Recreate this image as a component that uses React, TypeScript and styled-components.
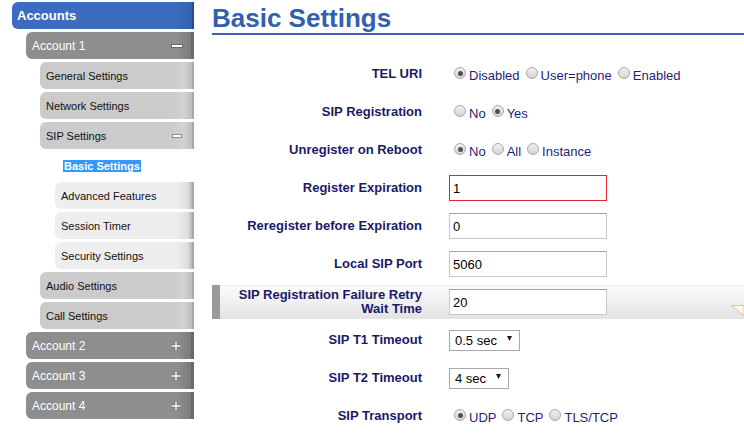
import React from 'react';
import styled, { createGlobalStyle, css } from 'styled-components';

const Global = createGlobalStyle`
  html, body { margin: 0; padding: 0; background: #fff; }
  body { font-family: "Liberation Sans", Arial, sans-serif; overflow: hidden; }
  * { box-sizing: border-box; }
`;

const Page = styled.div`
  display: flex;
  gap: 18px;
  width: 744px;
  height: 436px;
  overflow: hidden;
`;

const Sidebar = styled.nav`
  width: 194px;
  flex: none;
  padding-top: 2px;
  display: flex;
  flex-direction: column;
  gap: 3px;
`;

type Tone = 'blue' | 'dark' | 'light' | 'lighter' | 'none';

const tones: Record<Tone, ReturnType<typeof css>> = {
  blue: css`
    background: linear-gradient(to right, #3b6cc0 0, #3b6cc0 calc(100% - 18px), #3160ad calc(100% - 2px), #264c8e calc(100% - 2px));
    color: #fff;
    font-weight: bold;
    font-size: 13px;
  `,
  dark: css`
    background: linear-gradient(to right, #8e8e8e 0, #8e8e8e calc(100% - 16px), #7a7a7a calc(100% - 3px), #6a6a6a calc(100% - 3px));
    color: #fff;
    font-size: 12px;
  `,
  light: css`
    background: linear-gradient(to right, #cbcbcb 0, #cbcbcb calc(100% - 22px), #d3d3d3 calc(100% - 10px), #bdbdbd calc(100% - 2px), #a8a8a8 calc(100% - 2px));
    color: #111;
    font-size: 11px;
  `,
  lighter: css`
    background: linear-gradient(to right, #eeeeee 0, #eeeeee calc(100% - 18px), #dedede calc(100% - 6px), #b4b4b4 calc(100% - 2px), #a8a8a8 calc(100% - 2px));
    color: #111;
    font-size: 11px;
  `,
  none: css`
    background: transparent;
    color: #111;
    font-size: 11px;
  `,
};

const indents = [12, 26, 40, 55];

const NavItem = styled.div<{ $level: number; $tone: Tone }>`
  height: 27px;
  margin-left: ${p => indents[p.$level]}px;
  padding: 0 12px 0 ${p => (p.$tone === 'blue' ? 5 : 6)}px;
  display: flex;
  align-items: center;
  justify-content: space-between;
  border-radius: ${p => (p.$tone === 'none' ? '0' : '6px 0 0 6px')};
  ${p => tones[p.$tone]}
`;

const Selected = styled.span`
  margin-left: 2px;
  background: #3399ff;
  color: #fff;
  font-weight: bold;
  padding: 0 1px;
  line-height: 12px;
`;

const MinusBar = styled.span<{ $outline?: boolean }>`
  display: block;
  width: 10px;
  height: ${p => (p.$outline ? 4 : 2)}px;
  background: #fff;
  ${p =>
    p.$outline
      ? css`border: 1px solid #8a8a8a;`
      : css`box-shadow: 0 0 0 1px #6a6a6a;`}
`;

const PlusIcon = () => (
  <svg width="12" height="12" viewBox="0 0 12 12">
    <path d="M6 1v10M1 6h10" stroke="#6a6a6a" strokeWidth="3" />
    <path d="M6 1.5v9M1.5 6h9" stroke="#fff" strokeWidth="1.4" />
  </svg>
);

const Main = styled.main`
  flex: 1;
  min-width: 0;
`;

const Title = styled.h1`
  margin: 0;
  padding-top: 3px;
  font-size: 26px;
  line-height: 30px;
  font-weight: bold;
  color: #3360ad;
  border-bottom: 2px solid #3a62b0;
`;

const Form = styled.div`
  margin-top: 22px;
  display: flex;
  flex-direction: column;
  gap: 4px;
`;

const Row = styled.div<{ $hl?: boolean }>`
  position: relative;
  height: 34px;
  display: grid;
  grid-template-columns: 210px 1fr;
  column-gap: 27px;
  align-items: center;
  ${p =>
    p.$hl &&
    css`
      background: linear-gradient(#fcfcfc, #e3e3e3);
      box-shadow: inset 8px 0 0 #9a9a9a, inset 0 1px 0 #ececec;
    `}
`;

const Label = styled.div`
  text-align: right;
  font-size: 13px;
  line-height: 14px;
  font-weight: bold;
  color: #1a1a68;
`;

const Control = styled.div`
  display: flex;
  align-items: center;
  gap: 1px;
`;

const RadioItem = styled.span`
  display: inline-flex;
  align-items: center;
  font-size: 13px;
  color: #1f1f78;
  padding-top: 2px;
`;

const RadioDot = styled.span<{ $checked?: boolean }>`
  position: relative;
  width: 12px;
  height: 12px;
  margin: 0 3px 0 5px;
  border-radius: 50%;
  border: 1px solid #a8a8a8;
  background: linear-gradient(#f0f0f0, #d4d4d4);
  transform: translateY(-2px);
  &::after {
    content: '';
    display: ${p => (p.$checked ? 'block' : 'none')};
    position: absolute;
    left: 2.5px;
    top: 2.5px;
    width: 5px;
    height: 5px;
    border-radius: 50%;
    background: #4f4f4f;
  }
`;

const TextInput = styled.input<{ $error?: boolean }>`
  width: 158px;
  height: 26px;
  padding: 0 3px;
  font-family: "Liberation Sans", Arial, sans-serif;
  font-size: 13px;
  color: #000;
  background: #fff;
  outline: none;
  border: 1px solid ${p => (p.$error ? '#e3262b' : '#c8c8c8')};
  border-top-color: ${p => (p.$error ? '#e3262b' : '#a2a2a2')};
`;

const SelectBox = styled.div`
  display: inline-flex;
  align-items: center;
  gap: 10px;
  height: 21px;
  padding: 0 7px 0 5px;
  border: 1px solid #a9a9a9;
  background: #fff;
  font-size: 13px;
  color: #000;
  svg { transform: translateY(-2px); }
`;

const TipCorner = styled.svg`
  position: absolute;
  right: 0;
  top: 20px;
`;

type Field =
  | { kind: 'radio'; options: string[]; checked: number }
  | { kind: 'input'; value: string; error?: boolean }
  | { kind: 'select'; value: string };

type RowData = { label: React.ReactNode; field: Field; hl?: boolean };

const rows: RowData[] = [
  { label: 'TEL URI', field: { kind: 'radio', options: ['Disabled', 'User=phone', 'Enabled'], checked: 0 } },
  { label: 'SIP Registration', field: { kind: 'radio', options: ['No', 'Yes'], checked: 1 } },
  { label: 'Unregister on Reboot', field: { kind: 'radio', options: ['No', 'All', 'Instance'], checked: 0 } },
  { label: 'Register Expiration', field: { kind: 'input', value: '1', error: true } },
  { label: 'Reregister before Expiration', field: { kind: 'input', value: '0' } },
  { label: 'Local SIP Port', field: { kind: 'input', value: '5060' } },
  {
    label: (
      <>
        SIP Registration Failure Retry
        <br />
        Wait Time
      </>
    ),
    field: { kind: 'input', value: '20' },
    hl: true,
  },
  { label: 'SIP T1 Timeout', field: { kind: 'select', value: '0.5 sec' } },
  { label: 'SIP T2 Timeout', field: { kind: 'select', value: '4 sec' } },
  { label: 'SIP Transport', field: { kind: 'radio', options: ['UDP', 'TCP', 'TLS/TCP'], checked: 0 } },
];

const renderField = (f: Field) => {
  if (f.kind === 'radio') {
    return f.options.map((o, i) => (
      <RadioItem key={o}>
        <RadioDot $checked={i === f.checked} />
        {o}
      </RadioItem>
    ));
  }
  if (f.kind === 'input') {
    return <TextInput $error={f.error} defaultValue={f.value} readOnly />;
  }
  return (
    <SelectBox>
      <span>{f.value}</span>
      <svg width="5" height="5" viewBox="0 0 5 5">
        <polygon points="0,0 5,0 2.5,5" fill="#1a1a1a" />
      </svg>
    </SelectBox>
  );
};

type NavData = { text: string; level: number; tone: Tone; icon?: 'minus' | 'minusOutline' | 'plus'; selected?: boolean };

const nav: NavData[] = [
  { text: 'Accounts', level: 0, tone: 'blue' },
  { text: 'Account 1', level: 1, tone: 'dark', icon: 'minus' },
  { text: 'General Settings', level: 2, tone: 'light' },
  { text: 'Network Settings', level: 2, tone: 'light' },
  { text: 'SIP Settings', level: 2, tone: 'light', icon: 'minusOutline' },
  { text: 'Basic Settings', level: 3, tone: 'none', selected: true },
  { text: 'Advanced Features', level: 3, tone: 'lighter' },
  { text: 'Session Timer', level: 3, tone: 'lighter' },
  { text: 'Security Settings', level: 3, tone: 'lighter' },
  { text: 'Audio Settings', level: 2, tone: 'light' },
  { text: 'Call Settings', level: 2, tone: 'light' },
  { text: 'Account 2', level: 1, tone: 'dark', icon: 'plus' },
  { text: 'Account 3', level: 1, tone: 'dark', icon: 'plus' },
  { text: 'Account 4', level: 1, tone: 'dark', icon: 'plus' },
];

export default function App() {
  return (
    <>
      <Global />
      <Page>
        <Sidebar>
          {nav.map(n => (
            <NavItem key={n.text} $level={n.level} $tone={n.tone}>
              {n.selected ? <Selected>{n.text}</Selected> : <span>{n.text}</span>}
              {n.icon === 'minus' && <MinusBar />}
              {n.icon === 'minusOutline' && <MinusBar $outline />}
              {n.icon === 'plus' && <PlusIcon />}
            </NavItem>
          ))}
        </Sidebar>
        <Main>
          <Title>Basic Settings</Title>
          <Form>
            {rows.map((r, i) => (
              <Row key={i} $hl={r.hl}>
                <Label>{r.label}</Label>
                <Control>{renderField(r.field)}</Control>
                {r.hl && (
                  <TipCorner width="13" height="11" viewBox="0 0 13 11">
                    <polygon points="0.5,0.5 13,0.5 13,10.5" fill="#fffbe8" stroke="#e3c48a" strokeWidth="1" />
                  </TipCorner>
                )}
              </Row>
            ))}
          </Form>
        </Main>
      </Page>
    </>
  );
}
